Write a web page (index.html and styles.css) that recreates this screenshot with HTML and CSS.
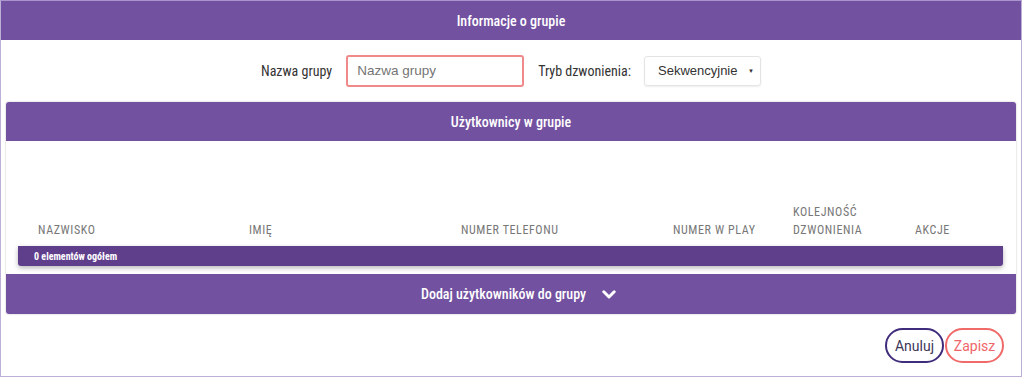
FILE: index.html
```html
<!DOCTYPE html>
<html lang="pl">
<head>
<meta charset="utf-8">
<link rel="stylesheet" href="styles.css">
</head>
<body>
<div class="panel">
  <div class="panel-head">Informacje o grupie</div>
  <div class="form-row">
    <label class="lbl">Nazwa grupy</label>
    <div class="input">Nazwa grupy</div>
    <label class="lbl lbl2">Tryb dzwonienia:</label>
    <div class="select"><span>Sekwencyjnie</span><span class="caret">▼</span></div>
  </div>
  <div class="card">
    <div class="card-head">Użytkownicy w grupie</div>
    <div class="card-body">
      <div class="thead">
        <div class="th">NAZWISKO</div>
        <div class="th">IMIĘ</div>
        <div class="th">NUMER TELEFONU</div>
        <div class="th">NUMER W PLAY</div>
        <div class="th">KOLEJNOŚĆ<br>DZWONIENIA</div>
        <div class="th">AKCJE</div>
      </div>
      <div class="tfoot">0 elementów ogółem</div>
    </div>
    <div class="card-foot">
      <span>Dodaj użytkowników do grupy</span>
      <svg class="chev" width="14" height="9" viewBox="0 0 14 9"><path d="M1.8 1.8 L7 7 L12.2 1.8" fill="none" stroke="#fff" stroke-width="3" stroke-linecap="round" stroke-linejoin="round"/></svg>
    </div>
  </div>
  <div class="actions">
    <button class="btn btn-cancel">Anuluj</button>
    <button class="btn btn-save">Zapisz</button>
  </div>
</div>
</body>
</html>
```

FILE: styles.css
```css
* { box-sizing: border-box; }
body { margin: 0; background: #fff; font-family: Roboto, "Noto Sans", sans-serif; }
.panel {
  width: 1022px;
  height: 377px;
  border: 1px solid #bdb0d6;
  border-top-color: #a995cb;
  display: flex;
  flex-direction: column;
}
.panel-head, .card-head, .card-foot {
  height: 39px;
  flex: none;
  background: #7351a1;
  color: #fff;
  font-size: 14px;
  font-weight: 500;
  font-stretch: 80%;
  display: flex;
  align-items: center;
  justify-content: center;
}
.form-row {
  height: 62px;
  flex: none;
  display: flex;
  align-items: center;
  justify-content: center;
  padding-bottom: 1px;
}
.lbl { font-size: 14px; font-stretch: 79%; color: #333; margin-right: 14px; }
.lbl2 { margin-right: 13px; }
.input {
  width: 178px;
  height: 32px;
  border: 2px solid #f08a8a;
  border-radius: 3px;
  font-family: "Liberation Sans", Arial, sans-serif;
  font-size: 13.5px;
  color: #757575;
  padding-left: 9px;
  display: flex;
  align-items: center;
  margin-right: 14px;
}
.select {
  width: 117px;
  height: 30px;
  border: 1px solid #e4e4e4;
  border-radius: 3px;
  box-shadow: 0 1px 2px rgba(0,0,0,0.07);
  font-family: "Liberation Sans", Arial, sans-serif;
  font-size: 13px;
  color: #333;
  display: flex;
  align-items: center;
  justify-content: space-between;
  padding: 0 6px 0 13px;
}
.caret { font-size: 6px; color: #333; }
.card {
  margin: 0 5px;
  height: 212px;
  flex: none;
  border-radius: 3px;
  box-shadow: 0 0 2px rgba(0,0,0,0.28);
  display: flex;
  flex-direction: column;
}
.card-head { border-radius: 3px 3px 0 0; }
.card-body { padding: 0 13px 8px 12px; }
.thead {
  display: grid;
  grid-template-columns: 211px 212px 212px 120px 122px 1fr;
  align-items: end;
  padding-top: 62px;
  padding-bottom: 7px;
}
.th {
  padding-left: 20px;
  font-size: 12px;
  font-stretch: 82%;
  line-height: 18px;
  letter-spacing: 0.6px;
  color: #777;
}
.tfoot {
  height: 20px;
  background: #5f3e8c;
  color: #fff;
  font-size: 10px;
  font-weight: 700;
  font-stretch: 75%;
  padding-left: 16px;
  display: flex;
  align-items: center;
  border-radius: 0 0 3px 3px;
  box-shadow: 0 2px 5px rgba(0,0,0,0.28);
}
.card-foot {
  height: 40px;
  gap: 16px;
  padding-left: 15px;
  border-radius: 0 0 3px 3px;
}
.chev { margin-top: 1px; }
.actions {
  display: flex;
  justify-content: flex-end;
  gap: 1px;
  padding: 14px 17px 0 0;
}
.btn {
  height: 35px;
  border-radius: 18px;
  background: #fff;
  font-family: Roboto, sans-serif;
  font-size: 14px;
  font-stretch: 90%;
  padding: 0;
}
.btn-cancel { width: 59px; border: 2px solid #3f2c7c; color: #3d3558; }
.btn-save { width: 59px; border: 2px solid #f06a6a; color: #f0656a; }
```
